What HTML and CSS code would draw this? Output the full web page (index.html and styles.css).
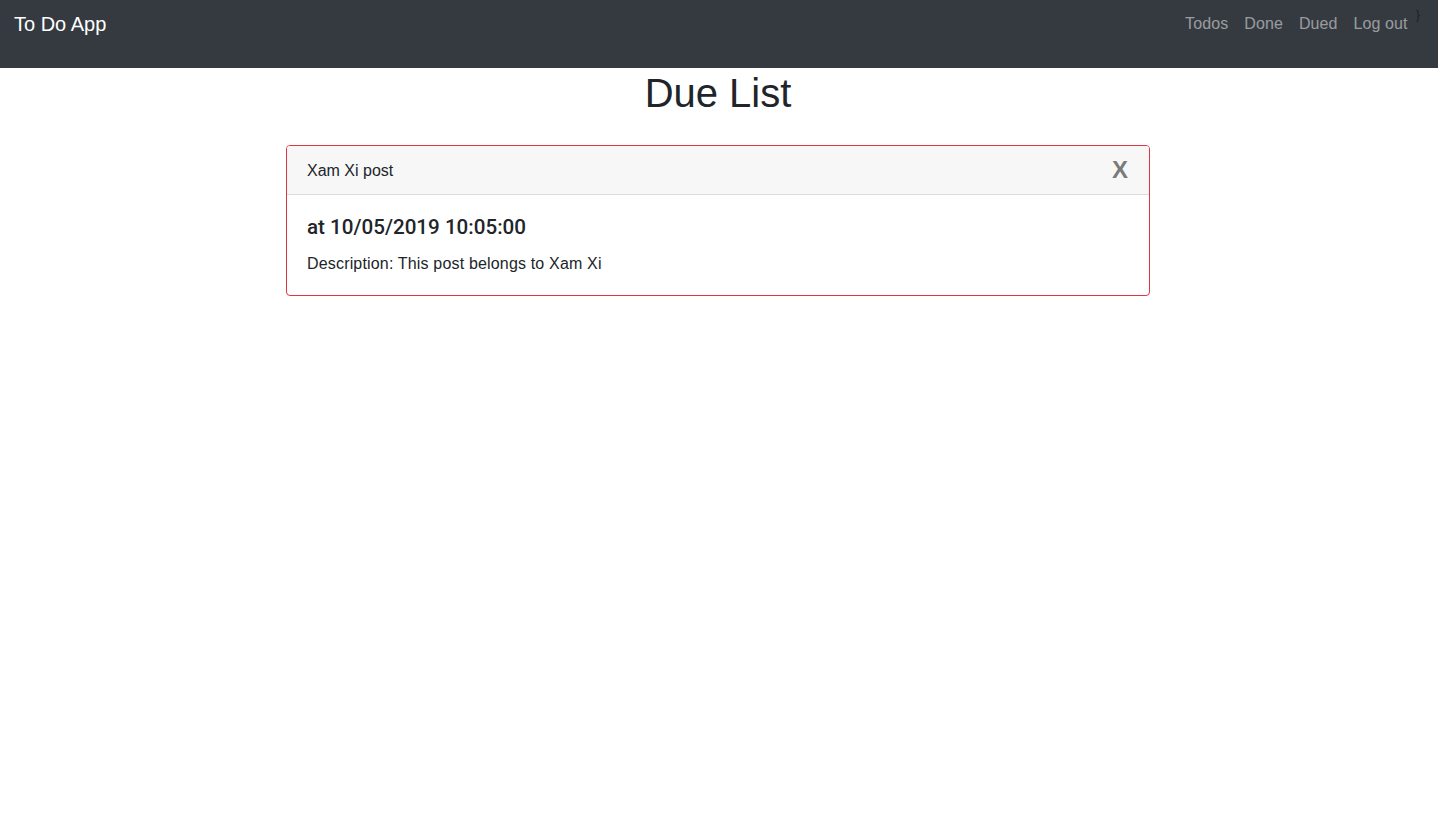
FILE: index.html
```html
<!DOCTYPE html>
<html>
<head>
<meta charset="utf-8">
<title>To Do App</title>
<link rel="stylesheet" href="styles.css">
</head>
<body>
<nav class="navbar">
  <a class="brand" href="#">To Do App</a>
  <div class="nav-right">
    <ul class="nav-links">
      <li><a href="#">Todos</a></li>
      <li><a href="#">Done</a></li>
      <li><a href="#">Dued</a></li>
      <li><a href="#">Log out</a></li>
    </ul>
    <span class="stray">}</span>
  </div>
</nav>
<main class="page">
  <h1 class="title">Due List</h1>
  <div class="card">
    <div class="card-header">
      <span class="card-name">Xam Xi post</span>
      <button class="close">X</button>
    </div>
    <div class="card-body">
      <h5 class="card-title">at 10/05/2019 10:05:00</h5>
      <p class="card-text">Description: This post belongs to Xam Xi</p>
    </div>
  </div>
</main>
</body>
</html>
```
FILE: styles.css
```css
* { box-sizing: border-box; }
body {
  margin: 0;
  font-family: "Liberation Sans", Arial, sans-serif;
  font-size: 16px;
  line-height: 1.5;
  color: #212529;
  background: #fff;
}
a { text-decoration: none; }
.navbar {
  height: 68px;
  background: #343a40;
  display: flex;
  justify-content: space-between;
  align-items: flex-start;
  padding: 0 18px 0 14px;
}
.brand {
  color: #fff;
  font-size: 20px;
  line-height: 30px;
  margin-top: 9px;
}
.nav-right {
  display: flex;
  align-items: flex-start;
}
.nav-links {
  list-style: none;
  margin: 12px 0 0 0;
  padding: 0;
  display: flex;
}
.nav-links a {
  display: block;
  padding: 0 8px;
  line-height: 24px;
  color: rgba(255, 255, 255, 0.5);
  letter-spacing: 0.1px;
}
.stray {
  font-size: 13px;
  line-height: 16px;
  margin-top: 7px;
  color: #1e2226;
}
.page {
  display: flex;
  flex-direction: column;
  align-items: center;
  padding-right: 2px;
}
.title {
  margin: 1px 0 28px;
  font-size: 40px;
  line-height: 48px;
  font-weight: 500;
}
.card {
  width: 864px;
  border: 1px solid #dc3545;
  border-radius: 4px;
  overflow: hidden;
}
.card-header {
  display: flex;
  justify-content: space-between;
  align-items: center;
  padding: 13px 20px 11px;
  background: #f7f7f7;
  border-bottom: 1px solid #dcdcdc;
  line-height: 24px;
}
.close {
  border: 0;
  background: transparent;
  padding: 0;
  font-family: "Liberation Sans", Arial, sans-serif;
  font-size: 24px;
  font-weight: 700;
  line-height: 1;
  color: #000;
  opacity: 0.5;
  margin-right: 1px;
  margin-top: -2px;
}
.card-body {
  padding: 20px 20px 19px;
}
.card-title {
  margin: 0 0 12px;
  font-family: Roboto, "Liberation Sans", sans-serif;
  font-size: 20.6px;
  line-height: 24px;
  font-weight: 500;
}
.card-text {
  margin: 0;
  line-height: 24px;
  padding-top: 1px;
  letter-spacing: 0.17px;
}
```
